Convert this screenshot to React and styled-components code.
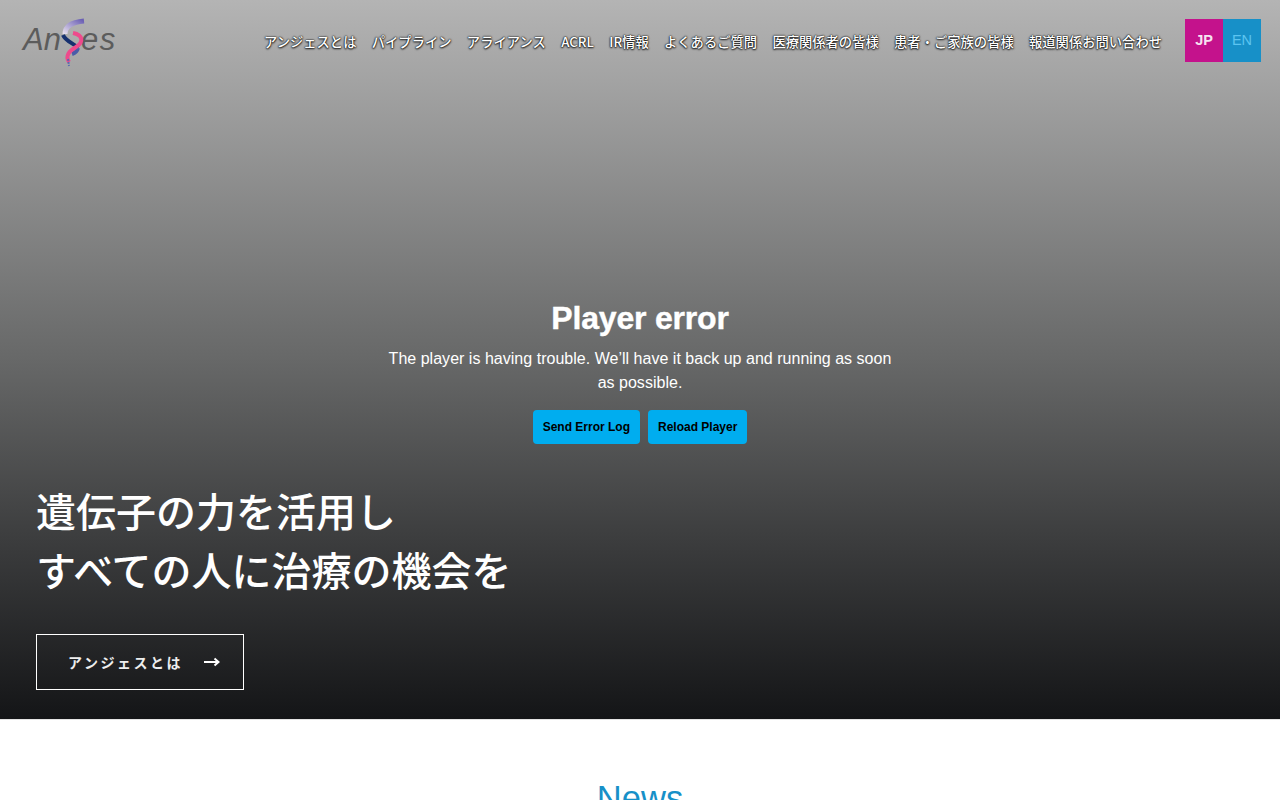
import React from 'react';
import styled, { createGlobalStyle } from 'styled-components';

const GlobalStyle = createGlobalStyle`
  html, body { margin: 0; padding: 0; background: #fff; overflow: hidden; }
  body { font-family: "Liberation Sans", "Noto Sans CJK JP", sans-serif; }
`;

const navItems = [
  'アンジェスとは', 'パイプライン', 'アライアンス', 'ACRL', 'IR情報', 'よくあるご質問',
  '医療関係者の皆様', '患者・ご家族の皆様', '報道関係お問い合わせ',
];

const Hero = styled.section`
  height: 719px;
  display: flex;
  flex-direction: column;
  background: linear-gradient(to bottom, #b4b4b4 0%, #676868 50%, #3c3d3e 75%, #141517 100%);
  border-bottom: 1px solid #e4e4e4;
`;

const Header = styled.header`
  display: flex;
  align-items: flex-start;
  justify-content: space-between;
  padding: 16px 19px 0 23px;
`;

const Logo = styled.div`
  position: relative;
  width: 93px;
  height: 50px;
  font-family: "Liberation Sans", sans-serif;
  font-style: italic;
  font-size: 31px;
  line-height: 47px;
  color: #5c5c5c;
  display: flex;
`;

const LogoEnd = styled.span`
  margin-left: 20px;
  letter-spacing: 1.5px;
`;

const LogoMark = styled.svg`
  position: absolute;
  left: 35px;
  top: 0;
`;

const HeaderRight = styled.div`
  display: flex;
  align-items: center;
  gap: 23px;
  padding-top: 3px;
`;

const Nav = styled.nav`
  display: flex;
  gap: 15.3px;
  padding-top: 2px;
`;

const NavLink = styled.a`
  font-family: "Noto Sans CJK JP", sans-serif;
  font-size: 13.3px;
  font-weight: 500;
  line-height: 20px;
  white-space: nowrap;
  color: #fff;
  text-shadow: 0 0 2px #000, 0 1px 2px #222, 0 0 1px #222;
`;

const Lang = styled.div`
  display: flex;
  height: 43px;
`;

const LangItem = styled.a`
  width: 38px;
  display: flex;
  align-items: center;
  justify-content: center;
  padding-bottom: 1px;
  box-sizing: border-box;
  font-size: 14.5px;
  font-weight: ${p => (p.$active ? 700 : 400)};
  color: ${p => (p.$active ? '#f6e2f0' : '#5cc4f0')};
  background: ${p => (p.$active ? '#c4128c' : '#1790c8')};
`;

const PlayerError = styled.div`
  width: 520px;
  margin: 232px auto 0;
  text-align: center;
  color: #fff;
`;

const ErrorTitle = styled.h2`
  margin: 0 0 9px;
  font-size: 32px;
  line-height: 40px;
  font-weight: 700;
  letter-spacing: -0.2px;
  -webkit-text-stroke: 0.4px #fff;
`;

const ErrorText = styled.p`
  margin: 0 auto;
  width: 510px;
  font-size: 16px;
  line-height: 24px;
  letter-spacing: 0.02px;
`;

const ErrorActions = styled.div`
  display: flex;
  justify-content: center;
  gap: 8px;
  margin-top: 15px;
`;

const ErrorButton = styled.button`
  height: 34px;
  padding: 0 10px;
  border: 0;
  border-radius: 4px;
  background: #00adef;
  color: #000;
  font-family: "Liberation Sans", sans-serif;
  font-size: 12px;
  font-weight: 700;
`;

const Copy = styled.div`
  padding: 37px 0 0 36px;
`;

const Headline = styled.h1`
  margin: 0;
  font-family: "Noto Sans CJK JP", sans-serif;
  font-weight: 500;
  font-size: 40px;
  line-height: 59px;
  color: #fff;
`;

const CtaLink = styled.a`
  display: flex;
  align-items: center;
  justify-content: space-between;
  box-sizing: border-box;
  width: 208px;
  height: 56px;
  margin-top: 35px;
  padding: 0 23px 1px 31px;
  border: 1px solid #fff;
  color: #eee;
  font-family: "Noto Sans CJK JP", sans-serif;
  font-size: 14px;
  font-weight: 700;
  letter-spacing: 2.5px;
`;

const News = styled.section`
  padding-top: 56px;
  text-align: center;
`;

const NewsTitle = styled.h2`
  margin: 0;
  font-size: 34.5px;
  line-height: 44px;
  font-weight: 400;
  color: #1790c8;
`;

const App = () => (
  <>
    <GlobalStyle />
    <Hero>
      <Header>
        <Logo>
          An<LogoEnd>es</LogoEnd>
          <LogoMark width="30" height="52" viewBox="0 0 30 52">
            <defs>
              <linearGradient id="ribbon" x1="1" y1="0" x2="0" y2="1">
                <stop offset="0" stopColor="#6a5fb4" />
                <stop offset="1" stopColor="#e4dcec" />
              </linearGradient>
            </defs>
            <path d="M26 5 C15 6 7 10 7 18" fill="none" stroke="url(#ribbon)" strokeWidth="5" />
            <path d="M5 19 C8 26 16 27 20 32" fill="none" stroke="#16306f" strokeWidth="4" />
            <path d="M20 32 C19 36 17 37 14 38" fill="none" stroke="#4a5ca8" strokeWidth="4" />
            <path d="M15 17 C25 19 26 26 18 31 C11 35 7 40 11 46" fill="none" stroke="#ee4a8c" strokeWidth="4" />
            <path d="M10 43 L11 50" fill="none" stroke="#5b6bb0" strokeWidth="2" strokeDasharray="2 1" />
          </LogoMark>
        </Logo>
        <HeaderRight>
          <Nav>
            {navItems.map(item => <NavLink key={item}>{item}</NavLink>)}
          </Nav>
          <Lang>
            <LangItem $active>JP</LangItem>
            <LangItem>EN</LangItem>
          </Lang>
        </HeaderRight>
      </Header>
      <PlayerError>
        <ErrorTitle>Player error</ErrorTitle>
        <ErrorText>The player is having trouble. We’ll have it back up and running as soon as possible.</ErrorText>
        <ErrorActions>
          <ErrorButton>Send Error Log</ErrorButton>
          <ErrorButton>Reload Player</ErrorButton>
        </ErrorActions>
      </PlayerError>
      <Copy>
        <Headline>遺伝子の力を活用し<br />すべての人に治療の機会を</Headline>
        <CtaLink>
          アンジェスとは
          <svg width="16" height="10" viewBox="0 0 16 10">
            <path d="M0 5 H14 M10.5 1.5 L14.5 5 L10.5 8.5" fill="none" stroke="#fff" strokeWidth="2" />
          </svg>
        </CtaLink>
      </Copy>
    </Hero>
    <News>
      <NewsTitle>News</NewsTitle>
    </News>
  </>
);

export default App;
